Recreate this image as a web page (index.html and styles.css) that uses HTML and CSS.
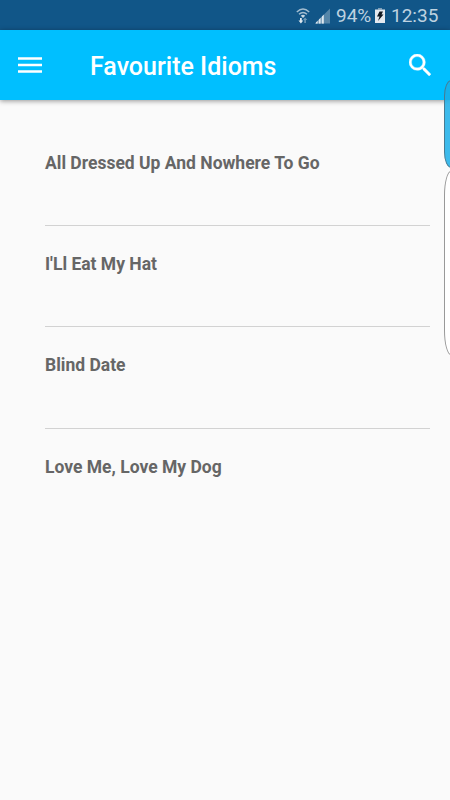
FILE: index.html
```html
<!DOCTYPE html>
<html lang="en">
<head>
<meta charset="utf-8">
<title>Favourite Idioms</title>
<link rel="stylesheet" href="styles.css">
</head>
<body>
<div class="status">
<svg class="wifi" width="14" height="16" viewBox="0 0 14 16"><path d="M.8 4Q7-2 13.200 4M3 6.300Q7 2.500 11 6.300" fill="none" stroke="#a3bdd0" stroke-width="1.400"/><path d="M4.800 7.800Q7 5.800 9.200 7.800L7 10z" fill="#c5d6e2"/><path d="M4 10h1.800v2.500H7.300L4.900 15.500 2.500 12.500H4z" fill="#e0e9f0"/><path d="M8.300 15h1.600v-3h1.400L9.100 9.500 7 12h1.300z" fill="#6e98b6"/></svg>
<svg class="signal" width="15" height="16" viewBox="0 0 15 16"><path d="M0 15.500L15 .5v15z" fill="#5586a9"/><path d="M0 15.500L9 6.500v9z" fill="#84a7c0"/><path d="M1 15.500v-1l1.500-1.500v2.500zM4 15.500v-4L5.500 10v5.500zM7 15.500v-7L8.700 6.800v8.700z" fill="#dce7ef"/></svg>
<span class="percent">94%</span>
<svg class="battery" width="10" height="15" viewBox="0 0 10 15"><path d="M3 0h4v1.500H3z" fill="#7e9fb9"/><path d="M0 1.500h10V15H0z" fill="#e4e9ef"/><path d="M4.500 3.500H8L6.500 6.500H8.500L3 13 4.500 8.500H2z" fill="#111820"/></svg>
<span class="clock">12:35</span>
</div>
<header class="appbar">
<svg class="menu" width="24" height="17" viewBox="0 0 24 17"><path d="M0 .2h24v2.600H0zM0 6.700h24v2.600H0zM0 13.200h24v2.600H0z" fill="#fff"/></svg>
<h1>Favourite Idioms</h1>
<svg class="search" width="22" height="22" viewBox="3 3 17.490 17.490"><path fill="#fff" stroke="#fff" stroke-width=".3" d="M15.500 14h-.79l-.28-.27A6.470 6.470 0 0 0 16 9.500 6.500 6.500 0 1 0 9.500 16c1.610 0 3.090-.59 4.230-1.570l.27.28v.79l5 4.990L20.490 19l-4.990-5zm-6 0C7.010 14 5 11.990 5 9.500S7.010 5 9.500 5 14 7.010 14 9.500 11.990 14 9.500 14z"/></svg>
</header>
<main class="list">
<div class="item">All Dressed Up And Nowhere To Go</div>
<div class="item">I'Ll Eat My Hat</div>
<div class="item">Blind Date</div>
<div class="item">Love Me, Love My Dog</div>
</main>
<div class="edge blue"></div>
<div class="edge white"></div>
</body>
</html>
```
FILE: styles.css
```css
* { box-sizing: border-box; }
body { margin: 0; width: 450px; height: 800px; overflow: hidden; position: relative; background: #fafafa; font-family: Roboto, sans-serif; }
.status { height: 30px; background: #115688; display: flex; align-items: center; padding: 1px 0 0 296px; color: #bed2e0; font-size: 19px; line-height: 30px; white-space: nowrap; }
.signal { margin-left: 5px; }
.percent { width: 34px; margin: 1px 0 0 6px; }
.battery { margin-left: 5px; }
.clock { margin: 1px 0 0 6px; }
.appbar { height: 70px; background: #00bfff; display: flex; align-items: center; padding: 0 19.500px 0 18px; box-shadow: 0 1px 5px rgba(0,0,0,.42); }
.menu { margin-top: 1px; }
h1 { margin: 3px 0 0 48px; color: #fff; font-size: 25px; line-height: 31px; font-weight: 500; white-space: nowrap; }
.search { margin: 0 0 1px auto; }
.list { margin: 25px 20px 0 45px; }
.item { height: 101px; padding-top: 26px; border-bottom: 1px solid #d2d2d2; color: #666; font-size: 17.5px; line-height: 24px; font-weight: 700; white-space: nowrap; }
.item:nth-child(3) { height: 102px; }
.item:last-child { border: 0; }
.edge { position: absolute; left: 444px; width: 14px; border: 1px solid #999; }
.blue { top: 80px; height: 88px; background: rgba(26,174,232,.85); border-color: #477b92; border-radius: 7px / 16px; }
.white { top: 171px; height: 184px; background: #fff; border-radius: 8px / 28px; }
```
